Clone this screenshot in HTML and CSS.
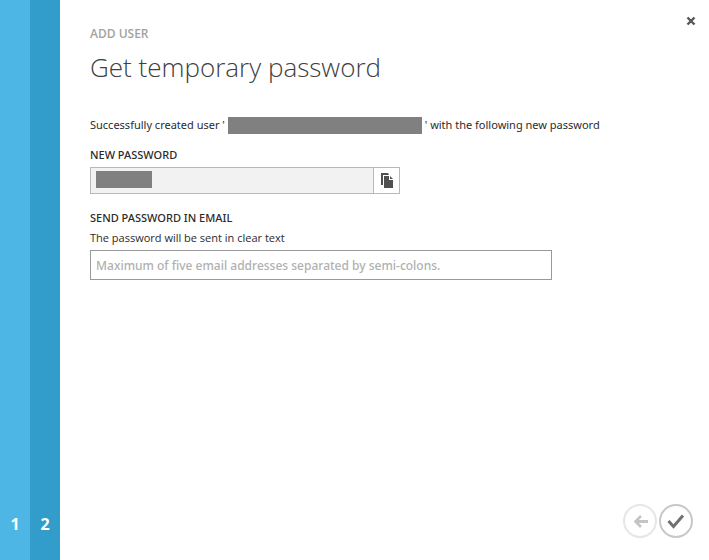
FILE: index.html
```html
<!DOCTYPE html>
<html lang="en">
<head>
<meta charset="utf-8">
<meta name="viewport" content="width=device-width, initial-scale=1">
<title>Add user</title>
<link rel="stylesheet" href="styles.css">
</head>
<body>
<div class="wizard">
  <ol class="steps">
    <li class="step">1</li>
    <li class="step step-current">2</li>
  </ol>
  <main class="panel">
    <button class="close" type="button" aria-label="Close">
      <svg width="10" height="10" viewBox="0 0 10 10"><path d="M1.5 1.5l7 7M8.500 1.500l-7 7" fill="none" stroke="#555" stroke-width="2.4"/></svg>
    </button>
    <header>
      <p class="eyebrow">ADD USER</p>
      <h1 class="title">Get temporary password</h1>
    </header>
    <p class="message">Successfully created user '<span class="redacted redacted-user"></span>' with the following new password</p>
    <form class="form">
      <label class="label" for="password">NEW PASSWORD</label>
      <div class="password">
        <div class="password-value">
          <input id="password" class="password-input" type="text" readonly>
          <span class="redacted redacted-password"></span>
        </div>
        <button class="copy" type="button" aria-label="Copy password">
          <svg width="12" height="15" viewBox="0 0 12 15" fill="#505050"><path d="M0 0h7l1 2H2v10H0z"/><path d="M3 3h5v4h4v8H3z"/><path d="M9 3l3 3H9z"/></svg>
        </button>
      </div>
      <label class="label" for="email">SEND PASSWORD IN EMAIL</label>
      <p class="hint" id="email-hint">The password will be sent in clear text</p>
      <input id="email" class="email" type="text" aria-describedby="email-hint" placeholder="Maximum of five email addresses separated by semi-colons.">
    </form>
    <footer class="actions">
      <button type="button" aria-label="Back" disabled>
        <svg width="34" height="34" viewBox="0 0 34 34" fill="none"><circle cx="17" cy="17" r="16" stroke="#e6e6e6" stroke-width="2"/><path d="M25 17.500H13" stroke="#c4c4c4" stroke-width="3"/><path d="M18 12l-5.500 5.500 5.500 5.500" stroke="#c4c4c4" stroke-width="2.600"/></svg>
      </button>
      <button type="button" aria-label="Finish">
        <svg width="34" height="34" viewBox="0 0 34 34" fill="none"><circle cx="17" cy="17" r="16" stroke="#c8c8c8" stroke-width="2"/><path d="M9.500 17l5 5.500L24 11.500" stroke="#707070" stroke-width="3"/></svg>
      </button>
    </footer>
  </main>
</div>
</body>
</html>
```
FILE: styles.css
```css
* {
  box-sizing: border-box;
}

body {
  margin: 0;
  background: #fff;
  color: #2b2b2b;
  font: 11px/18px "Open Sans", "Noto Sans", sans-serif;
}

p, h1, ol {
  margin: 0;
  padding: 0;
}

button {
  padding: 0;
  border: 0;
  background: none;
  cursor: pointer;
}

svg {
  display: block;
}

.wizard {
  display: flex;
  min-height: 100vh;
}

.steps {
  display: flex;
  flex: none;
  list-style: none;
}

.step {
  display: flex;
  align-items: flex-end;
  justify-content: center;
  width: 30px;
  padding-bottom: 24px;
  background: #4db6e4;
  color: #fff;
  font-size: 16px;
  line-height: 24px;
  font-weight: 700;
}

.step-current {
  background: #329ccb;
}

.panel {
  position: relative;
  display: flex;
  flex: 1;
  flex-direction: column;
  padding: 25px 16px 22px 30px;
}

.close {
  position: absolute;
  top: 16px;
  right: 13px;
}

.eyebrow {
  color: #a3a3a3;
  font-size: 12px;
  font-weight: 600;
}

.title {
  margin-top: 4px;
  color: #404040;
  font-size: 26px;
  font-weight: 300;
  line-height: 40px;
}

.message {
  margin-top: 29px;
  font-family: "Noto Sans", "Open Sans", sans-serif;
}

.redacted {
  display: inline-block;
  height: 17px;
  background: #808080;
}

.redacted-user {
  width: 194px;
  margin: 0 3px;
  vertical-align: -5px;
}

.form {
  display: flex;
  flex-direction: column;
  margin-top: 12px;
}

.label {
  font-family: "Noto Sans", "Open Sans", sans-serif;
  font-weight: 500;
}

.password {
  display: flex;
  width: 310px;
  max-width: 100%;
  height: 27px;
  margin: 3px 0 15px;
  border: 1px solid #b8b8b8;
}

.password-value {
  position: relative;
  flex: 1;
}

.password-input {
  width: 100%;
  height: 100%;
  padding: 0 5px;
  border: 0;
  background: #f2f2f2;
}

.redacted-password {
  position: absolute;
  top: 3px;
  left: 5px;
  width: 56px;
}

.copy {
  display: grid;
  place-items: center;
  width: 26px;
  border-left: 1px solid #b8b8b8;
}

.hint {
  margin: 2px 0 3px;
  font-weight: 500;
}

.email {
  width: 462px;
  max-width: 100%;
  height: 30px;
  padding: 0 5px;
  border: 1px solid #999;
  font: 500 12px "Noto Sans", "Open Sans", sans-serif;
}

.email::placeholder {
  color: #b0b0b0;
  opacity: 1;
}

.actions {
  display: flex;
  justify-content: flex-end;
  gap: 2px;
  margin-top: auto;
}
```
